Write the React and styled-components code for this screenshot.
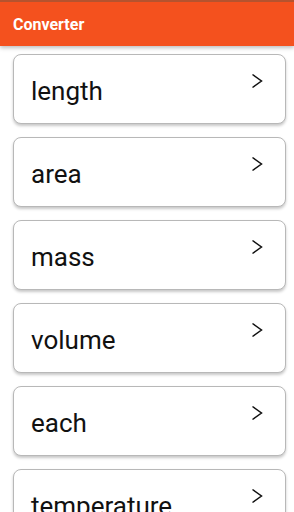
import React from "react";
import styled, { createGlobalStyle } from "styled-components";

const Global = createGlobalStyle`
  html, body { margin: 0; padding: 0; background: #ffffff; }
  body { font-family: Roboto, "Liberation Sans", sans-serif; overflow: hidden; }
`;

const Page = styled.div`
  width: 294px;
  height: 512px;
  overflow: hidden;
  display: flex;
  flex-direction: column;
`;

const AppBar = styled.header`
  height: 44px;
  flex-shrink: 0;
  background: #f4511e;
  border-top: 2px solid #b5532f;
  display: flex;
  align-items: center;
  padding-left: 13px;
  color: #ffffff;
  font-weight: 700;
  font-size: 16px;
  box-shadow: 0 2px 4px rgba(0, 0, 0, 0.25);
  position: relative;
  z-index: 1;
`;

const List = styled.div`
  display: flex;
  flex-direction: column;
  gap: 13px;
  padding: 8px 8px 0 13px;
`;

const Card = styled.div`
  height: 68px;
  border: 1px solid #b8b8b8;
  border-radius: 8px;
  background: #fff;
  box-shadow: 0 2px 3px rgba(0, 0, 0, 0.22);
  display: flex;
  justify-content: space-between;
  padding: 0 22px 0 17px;
  flex-shrink: 0;
`;

const Label = styled.span`
  font-size: 26px;
  color: #111;
  align-self: center;
  margin-top: 4px;
`;

const Chevron = styled.svg`
  width: 12px;
  height: 16px;
  margin-top: 18px;
`;

const items = ["length", "area", "mass", "volume", "each", "temperature"];

export default function App() {
  return (
    <Page>
      <Global />
      <AppBar>Converter</AppBar>
      <List>
        {items.map((t) => (
          <Card key={t}>
            <Label>{t}</Label>
            <Chevron viewBox="0 0 12 16">
              <polyline points="1.5,1.5 10.5,8 1.5,14.5" fill="none" stroke="#111" strokeWidth="1.5" />
            </Chevron>
          </Card>
        ))}
      </List>
    </Page>
  );
}
